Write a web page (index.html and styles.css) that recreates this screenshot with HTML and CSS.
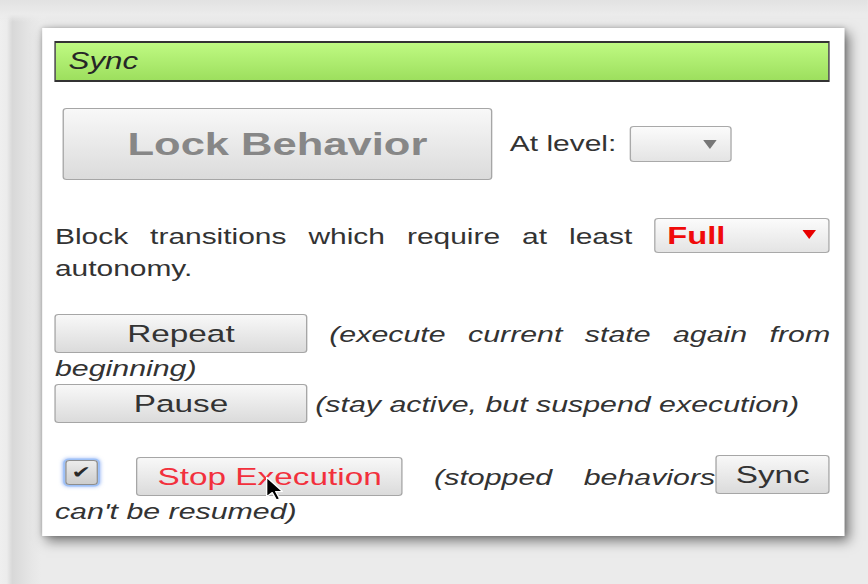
FILE: index.html
```html
<!DOCTYPE html>
<html>
<head>
<meta charset="utf-8">
<link rel="stylesheet" href="styles.css">
</head>
<body>
<div class="stage">
  <div class="card">
    <div class="titlebar">Sync</div>
    <div class="lock-row">
      <button class="btn btn-lock">Lock Behavior</button>
      <span class="label">At level:</span>
      <span class="select select-level"><span class="select-value"></span><svg class="arrow" viewBox="0 0 10 9" width="10" height="9" preserveAspectRatio="none"><path d="M0 0H10L5 9Z" fill="#777"/></svg></span>
    </div>
    <p class="para para-block">Block transitions which require at least <span class="select select-full"><span class="select-value">Full</span><svg class="arrow" viewBox="0 0 10 9" width="10" height="9" preserveAspectRatio="none"><path d="M0 0H10L5 9Z" fill="#e80000"/></svg></span> autonomy.</p>
    <p class="para para-repeat"><button class="btn btn-wide">Repeat</button> <em>(execute current state again from</em> <em>beginning)</em></p>
    <p class="para para-pause"><button class="btn btn-wide">Pause</button> <em>(stay active, but suspend execution)</em></p>
    <p class="para para-stop"><button class="btn btn-sync">Sync</button><span class="check">✔</span><button class="btn btn-stop">Stop Execution</button> <em>(stopped behaviors</em> <em>can't be resumed)</em></p>
  </div>
  <svg class="cursor" viewBox="0 0 12 20" width="13" height="25" preserveAspectRatio="none"><path d="M1 1L1 16.5L4.8 13.2L7.6 19.2L9.8 18.2L7.1 12.4L11.8 12.4Z" fill="#000" stroke="#fff" stroke-width="0.9" stroke-linejoin="round"/></svg>
</div>
</body>
</html>
```
FILE: styles.css
```css
html, body {
  margin: 0;
  padding: 0;
  background: #ebebeb;
  overflow: hidden;
}

body {
  font-family: "Liberation Sans", Arial, sans-serif;
}

.stage {
  position: relative;
  width: 638.2px;
  height: 584px;
  box-sizing: border-box;
  padding: 28px 0 0 30.9px;
  overflow: hidden;
  transform: scaleX(1.36);
  transform-origin: 0 0;
  background:
    linear-gradient(to bottom, #e2e2e2 0px, #ebebeb 14px, rgba(235,235,235,0) 22px),
    linear-gradient(to right, #efefef 0px, #ececec 5px, #d8d8d8 9px, #dfdfdf 16px, #e7e7e7 24px, #ebebeb 30px);
}

.card {
  width: 589.7px;
  height: 508px;
  box-sizing: border-box;
  padding: 13px 10.1px 0 9.5px;
  background: #fff;
  box-shadow: 3px 5px 10px rgba(0, 0, 0, 0.5), 0 0 4px rgba(0, 0, 0, 0.2);
  color: #333;
  font-size: 22px;
}

.titlebar {
  height: 41px;
  box-sizing: border-box;
  border-style: solid;
  border-color: #333;
  border-width: 2px 1.5px;
  background: linear-gradient(#bffa82, #9ddf5e);
  font-style: italic;
  font-size: 23px;
  line-height: 37px;
  padding-left: 9px;
  color: #262626;
}

.lock-row {
  display: flex;
  align-items: center;
  margin-top: 26px;
}

.btn {
  font-family: inherit;
  font-size: 24.5px;
  color: #333;
  border: 1px solid #a6a6a6;
  border-radius: 3px;
  background: linear-gradient(#f8f8f8, #dbdbdb);
  padding: 0;
  margin: 0;
  box-sizing: border-box;
  vertical-align: baseline;
}

.btn-lock {
  margin-left: 5.9px;
  width: 315.4px;
  height: 72px;
  font-weight: bold;
  font-size: 32px;
  color: #878787;
}

.label {
  margin-left: 13.2px;
}

.select {
  box-sizing: border-box;
  border: 1px solid #a9a9a9;
  border-radius: 3px;
  background: linear-gradient(#fbfbfb, #e4e4e4);
  align-items: center;
  justify-content: space-between;
}

.select-level {
  display: flex;
  margin-left: 10.3px;
  width: 75px;
  height: 36px;
  padding-right: 10px;
}

.select-full {
  display: inline-flex;
  width: 129.4px;
  height: 35px;
  padding: 0 9.6px 0 8.6px;
  margin-bottom: 3px;
  color: #f00a0a;
  font-weight: bold;
  font-size: 24px;
}

.arrow {
  display: block;
  margin-left: auto;
}

.select-full .arrow {
  margin-top: -2px;
}

.para {
  margin: 0;
  text-align: justify;
}

.para em {
  font-style: italic;
  font-size: 22.3px;
}

.para-block {
  margin-top: 38px;
}

.para-repeat {
  margin-top: 32px;
}

.para-pause {
  margin-top: 2px;
}

.para-stop {
  margin-top: 31px;
}

.btn-wide {
  width: 185.3px;
  height: 39px;
  margin-bottom: 3px;
}

.btn-stop {
  width: 195.6px;
  height: 39px;
  margin-bottom: 3px;
  color: #f2303c;
}

.btn-sync {
  float: right;
  width: 84.6px;
  height: 39px;
  margin-top: -2px;
}

.check {
  display: inline-block;
  width: 24px;
  height: 25px;
  box-sizing: border-box;
  margin: 3px 28.7px 0 7.4px;
  vertical-align: top;
  border: 1px solid #8d8d8d;
  border-radius: 3px;
  background: linear-gradient(#ececec, #cdcdcd);
  box-shadow: 0 0 0 1.5px #9dc0f7, 0 0 3px 2px rgba(90, 140, 240, 0.5);
  font-family: "DejaVu Sans", sans-serif;
  font-size: 17px;
  line-height: 23px;
  text-align: center;
  color: #2a2a2a;
}

.cursor {
  position: absolute;
  left: 194.6px;
  top: 476px;
}
```
